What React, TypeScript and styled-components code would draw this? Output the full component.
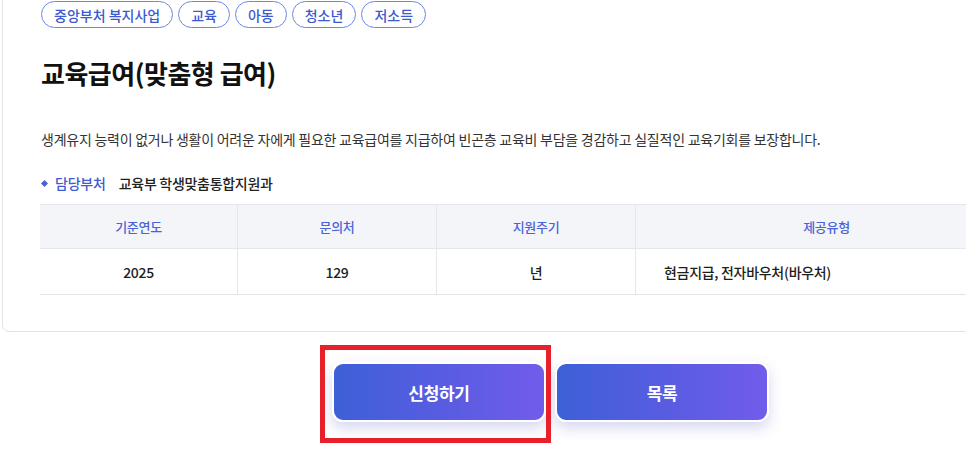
import React from 'react'
import styled, { createGlobalStyle } from 'styled-components'

const GlobalStyle = createGlobalStyle`
  html {
    overflow: hidden;
  }
  html, body {
    margin: 0;
    padding: 0;
    background: #ffffff;
  }
  body {
    font-family: "Noto Sans CJK KR", "Noto Sans", sans-serif;
    color: #222;
  }
`

const Page = styled.div`
  width: 1101px;
  padding: 0 2px 40px 2px;
  box-sizing: border-box;
`

const Card = styled.section`
  margin-top: -30px;
  padding: 30px 37px 36px 37px;
  border: 1px solid #e3e3e6;
  border-radius: 7px;
  background: #fff;
`

const TagList = styled.div`
  display: flex;
  gap: 5px;
  padding-left: 1px;
`

const Tag = styled.span`
  display: inline-flex;
  align-items: center;
  height: 27px;
  padding: 0 12px;
  box-sizing: border-box;
  border: 1px solid #6f86e2;
  border-radius: 14px;
  font-size: 14px;
  font-weight: 500;
  color: #3d59cf;
`

const Title = styled.h2`
  margin: 27px 0 0 1px;
  font-size: 26px;
  line-height: 36px;
  font-weight: 700;
  color: #111;
  letter-spacing: -0.5px;
`

const Description = styled.p`
  margin: 37px 0 0 1px;
  font-size: 14px;
  line-height: 22px;
  color: #333;
  letter-spacing: -0.25px;
`

const InfoRow = styled.div`
  display: flex;
  align-items: center;
  margin-top: 22px;
  font-size: 14px;
  line-height: 22px;
  font-weight: 500;
`

const Diamond = styled.span`
  width: 5px;
  height: 5px;
  margin-left: 2px;
  background: #4a63d6;
  transform: rotate(45deg);
  margin-right: 8px;
`

const InfoLabel = styled.span`
  color: #3f5bd3;
  margin-right: 13px;
  letter-spacing: -0.2px;
`

const InfoValue = styled.span`
  color: #222;
  letter-spacing: -0.3px;
`

const Table = styled.div`
  margin-top: 10px;
  border-top: 1px solid #e6e7ec;
  border-bottom: 1px solid #e3e3e6;
`

const Row = styled.div<{ $head?: boolean }>`
  display: grid;
  grid-template-columns: 198px 199px 199px 382px 1fr;
  height: ${p => (p.$head ? '43px' : '45px')};
  background: ${p => (p.$head ? '#f4f5f9' : '#fff')};
  border-top: ${p => (p.$head ? 'none' : '1px solid #e6e7ec')};
`

const Cell = styled.div<{ $head?: boolean; $left?: boolean }>`
  display: flex;
  align-items: center;
  justify-content: ${p => (p.$left ? 'flex-start' : 'center')};
  padding-left: ${p => (p.$left ? '28px' : '0')};
  border-right: 1px solid #e6e7ec;
  font-size: ${p => (p.$head ? '13px' : '14px')};
  font-weight: 500;
  color: ${p => (p.$head ? '#4b63d8' : '#1e1e1e')};
  letter-spacing: -0.3px;

  &:last-child {
    border-right: none;
  }
`

const ButtonRow = styled.div`
  display: flex;
  justify-content: center;
  gap: 9px;
  margin-top: 30px;
`

const Highlight = styled.div`
  position: relative;

  &::after {
    content: '';
    position: absolute;
    top: -17px;
    left: -12px;
    right: -5px;
    bottom: -21px;
    border: 5px solid #e8202a;
    pointer-events: none;
  }
`

const Button = styled.button`
  display: flex;
  align-items: center;
  justify-content: center;
  width: 214px;
  height: 60px;
  border: 2px solid #fff;
  border-radius: 11px;
  background: linear-gradient(90deg, #3d60d7 0%, #5a5ce2 55%, #715ceb 100%);
  box-shadow: 0 6px 14px rgba(90, 92, 200, 0.25);
  color: #fff;
  font-family: "Noto Sans CJK KR", "Noto Sans", sans-serif;
  font-size: 17px;
  font-weight: 700;
  letter-spacing: -0.3px;
  cursor: pointer;
`

const columns = ['기준연도', '문의처', '지원주기', '제공유형']

export default function App() {
  return (
    <Page>
      <GlobalStyle />
      <Card>
        <TagList>
          <Tag>중앙부처 복지사업</Tag>
          <Tag>교육</Tag>
          <Tag>아동</Tag>
          <Tag>청소년</Tag>
          <Tag>저소득</Tag>
        </TagList>
        <Title>교육급여(맞춤형 급여)</Title>
        <Description>
          생계유지 능력이 없거나 생활이 어려운 자에게 필요한 교육급여를 지급하여 빈곤층 교육비 부담을 경감하고 실질적인 교육기회를 보장합니다.
        </Description>
        <InfoRow>
          <Diamond />
          <InfoLabel>담당부처</InfoLabel>
          <InfoValue>교육부 학생맞춤통합지원과</InfoValue>
        </InfoRow>
        <Table>
          <Row $head>
            {columns.map(c => (
              <Cell $head key={c}>{c}</Cell>
            ))}
            <Cell $head />
          </Row>
          <Row>
            <Cell>2025</Cell>
            <Cell>129</Cell>
            <Cell>년</Cell>
            <Cell $left>현금지급, 전자바우처(바우처)</Cell>
            <Cell />
          </Row>
        </Table>
      </Card>
      <ButtonRow>
        <Highlight>
          <Button>신청하기</Button>
        </Highlight>
        <Button>목록</Button>
      </ButtonRow>
    </Page>
  )
}
